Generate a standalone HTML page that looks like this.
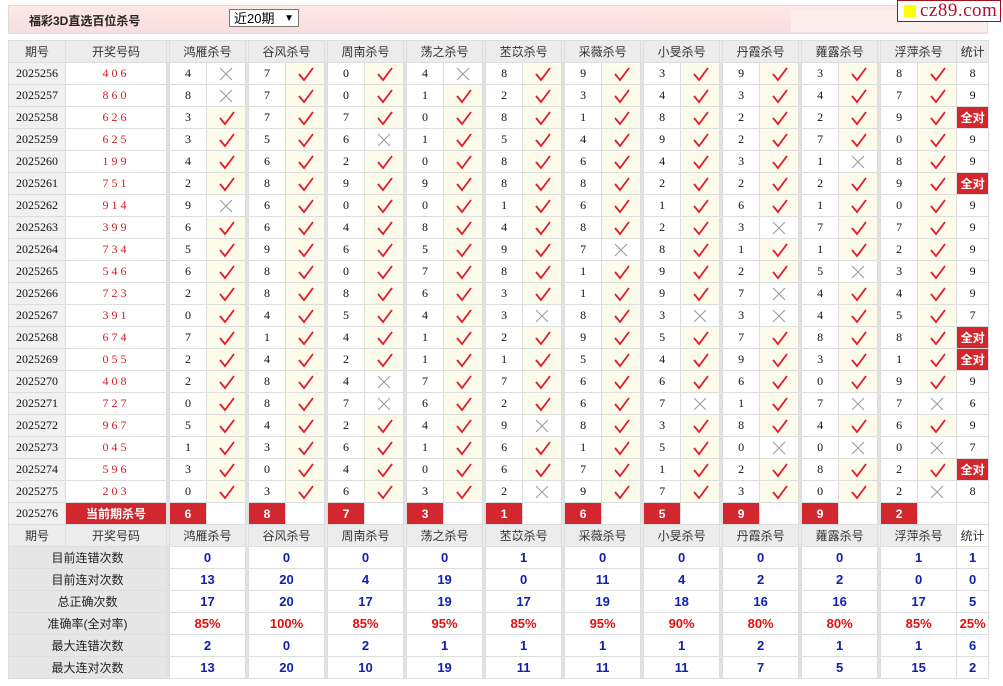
<!DOCTYPE html>
<html><head><meta charset="utf-8"><style>
body{margin:0;background:#fff;width:1003px;height:686px;overflow:hidden;font-family:"Liberation Sans","Noto Sans CJK SC",sans-serif;font-size:12px;position:relative}
.bar{position:absolute;left:8px;top:5px;width:978px;height:27px;border:1px solid #ddd;background:linear-gradient(#fde8e8,#f9dede)}
.bar .lt{position:absolute;left:782px;top:4px;width:196px;height:22px;background:#fdeeee}
.bar b{position:absolute;left:20px;top:6px;font-size:12px;color:#222}
.sel{position:absolute;left:220px;top:3px;width:70px;height:18px;border:1px solid #777;background:#fff;font-size:13px;line-height:18px;padding-left:4px;box-sizing:border-box;color:#000}
.sel i{position:absolute;right:4px;top:0;font-style:normal;font-size:10px}
.logo{position:absolute;left:897px;top:0;width:102px;height:20px;border:1px solid #a01020;background:#fff}
.logo span{position:absolute;left:6px;top:4px;width:12px;height:12px;background:#ff0}
.logo em{position:absolute;left:22px;top:-1px;font-style:normal;font-family:"Liberation Serif",serif;font-size:19px;color:#b01030;letter-spacing:0.5px}
table{position:absolute;left:8px;top:40px;border-collapse:collapse;table-layout:fixed;width:980px}
td{border:1px solid #ddd;height:21px;padding:0;text-align:center;font-family:"Liberation Serif","Noto Sans CJK SC",serif;font-size:12px;color:#111;overflow:hidden;white-space:nowrap}
tr.h td{background:#ececec;font-family:"Liberation Sans","Noto Sans CJK SC",sans-serif;color:#333}
td.q{background:#f1f1f1}
td.k{color:#d0202a;letter-spacing:3px}
td.s{background:#e2e2e2;border-top-color:#e2e2e2;border-bottom-color:#e2e2e2}
td.y{background:#fdfbea}
td.r{background:#d2272e;color:#fff;font-weight:bold;font-family:"Liberation Sans","Noto Sans CJK SC",sans-serif}
td.a{background:#d2272e;color:#fff;font-weight:bold;font-family:"Liberation Sans","Noto Sans CJK SC",sans-serif;font-size:12px}
td.l{background:#e6e6e6;font-family:"Liberation Sans","Noto Sans CJK SC",sans-serif;color:#222}
td.v{color:#1020b0;font-weight:bold;font-family:"Liberation Sans",sans-serif;font-size:13px}
td.p{color:#e01010;font-weight:bold;font-family:"Liberation Sans",sans-serif;font-size:13px}
svg{display:block;margin:0 auto;width:20px;height:18px}
</style></head><body>
<svg width="0" height="0" style="position:absolute"><defs>
<g id="c"><path d="M4 9 L9 15 L18 3" fill="none" stroke="#e01c30" stroke-width="1.8" stroke-linejoin="miter"/></g>
<g id="x"><path d="M4 3 L16 15 M16 3 L4 15" fill="none" stroke="#999" stroke-width="1"/></g>
</defs></svg>
<div class="bar"><div class="lt"></div><b>福彩3D直选百位杀号</b><div class="sel">近20期<i>▼</i></div></div>
<div class="logo"><span></span><em>cz89.com</em></div>
<table>
<colgroup><col style="width:57px"><col style="width:101px">
<col style="width:3px"><col style="width:37px"><col style="width:39px">
<col style="width:3px"><col style="width:37px"><col style="width:39px">
<col style="width:3px"><col style="width:37px"><col style="width:39px">
<col style="width:3px"><col style="width:37px"><col style="width:39px">
<col style="width:3px"><col style="width:37px"><col style="width:39px">
<col style="width:3px"><col style="width:37px"><col style="width:39px">
<col style="width:3px"><col style="width:37px"><col style="width:39px">
<col style="width:3px"><col style="width:37px"><col style="width:39px">
<col style="width:3px"><col style="width:37px"><col style="width:39px">
<col style="width:3px"><col style="width:37px"><col style="width:39px">
<col style="width:32px"></colgroup>
<tr class="h"><td>期号</td><td>开奖号码</td><td class="s"></td><td colspan="2">鸿雁杀号</td><td class="s"></td><td colspan="2">谷风杀号</td><td class="s"></td><td colspan="2">周南杀号</td><td class="s"></td><td colspan="2">荡之杀号</td><td class="s"></td><td colspan="2">苤苡杀号</td><td class="s"></td><td colspan="2">采薇杀号</td><td class="s"></td><td colspan="2">小旻杀号</td><td class="s"></td><td colspan="2">丹霞杀号</td><td class="s"></td><td colspan="2">蕹露杀号</td><td class="s"></td><td colspan="2">浮萍杀号</td><td>统计</td></tr>
<tr><td class="q">2025256</td><td class="k">406</td><td class="s"></td><td>4</td><td><svg><use href="#x"/></svg></td><td class="s"></td><td>7</td><td class="y"><svg><use href="#c"/></svg></td><td class="s"></td><td>0</td><td class="y"><svg><use href="#c"/></svg></td><td class="s"></td><td>4</td><td><svg><use href="#x"/></svg></td><td class="s"></td><td>8</td><td class="y"><svg><use href="#c"/></svg></td><td class="s"></td><td>9</td><td class="y"><svg><use href="#c"/></svg></td><td class="s"></td><td>3</td><td class="y"><svg><use href="#c"/></svg></td><td class="s"></td><td>9</td><td class="y"><svg><use href="#c"/></svg></td><td class="s"></td><td>3</td><td class="y"><svg><use href="#c"/></svg></td><td class="s"></td><td>8</td><td class="y"><svg><use href="#c"/></svg></td><td>8</td></tr>
<tr><td class="q">2025257</td><td class="k">860</td><td class="s"></td><td>8</td><td><svg><use href="#x"/></svg></td><td class="s"></td><td>7</td><td class="y"><svg><use href="#c"/></svg></td><td class="s"></td><td>0</td><td class="y"><svg><use href="#c"/></svg></td><td class="s"></td><td>1</td><td class="y"><svg><use href="#c"/></svg></td><td class="s"></td><td>2</td><td class="y"><svg><use href="#c"/></svg></td><td class="s"></td><td>3</td><td class="y"><svg><use href="#c"/></svg></td><td class="s"></td><td>4</td><td class="y"><svg><use href="#c"/></svg></td><td class="s"></td><td>3</td><td class="y"><svg><use href="#c"/></svg></td><td class="s"></td><td>4</td><td class="y"><svg><use href="#c"/></svg></td><td class="s"></td><td>7</td><td class="y"><svg><use href="#c"/></svg></td><td>9</td></tr>
<tr><td class="q">2025258</td><td class="k">626</td><td class="s"></td><td>3</td><td class="y"><svg><use href="#c"/></svg></td><td class="s"></td><td>7</td><td class="y"><svg><use href="#c"/></svg></td><td class="s"></td><td>7</td><td class="y"><svg><use href="#c"/></svg></td><td class="s"></td><td>0</td><td class="y"><svg><use href="#c"/></svg></td><td class="s"></td><td>8</td><td class="y"><svg><use href="#c"/></svg></td><td class="s"></td><td>1</td><td class="y"><svg><use href="#c"/></svg></td><td class="s"></td><td>8</td><td class="y"><svg><use href="#c"/></svg></td><td class="s"></td><td>2</td><td class="y"><svg><use href="#c"/></svg></td><td class="s"></td><td>2</td><td class="y"><svg><use href="#c"/></svg></td><td class="s"></td><td>9</td><td class="y"><svg><use href="#c"/></svg></td><td class="a">全对</td></tr>
<tr><td class="q">2025259</td><td class="k">625</td><td class="s"></td><td>3</td><td class="y"><svg><use href="#c"/></svg></td><td class="s"></td><td>5</td><td class="y"><svg><use href="#c"/></svg></td><td class="s"></td><td>6</td><td><svg><use href="#x"/></svg></td><td class="s"></td><td>1</td><td class="y"><svg><use href="#c"/></svg></td><td class="s"></td><td>5</td><td class="y"><svg><use href="#c"/></svg></td><td class="s"></td><td>4</td><td class="y"><svg><use href="#c"/></svg></td><td class="s"></td><td>9</td><td class="y"><svg><use href="#c"/></svg></td><td class="s"></td><td>2</td><td class="y"><svg><use href="#c"/></svg></td><td class="s"></td><td>7</td><td class="y"><svg><use href="#c"/></svg></td><td class="s"></td><td>0</td><td class="y"><svg><use href="#c"/></svg></td><td>9</td></tr>
<tr><td class="q">2025260</td><td class="k">199</td><td class="s"></td><td>4</td><td class="y"><svg><use href="#c"/></svg></td><td class="s"></td><td>6</td><td class="y"><svg><use href="#c"/></svg></td><td class="s"></td><td>2</td><td class="y"><svg><use href="#c"/></svg></td><td class="s"></td><td>0</td><td class="y"><svg><use href="#c"/></svg></td><td class="s"></td><td>8</td><td class="y"><svg><use href="#c"/></svg></td><td class="s"></td><td>6</td><td class="y"><svg><use href="#c"/></svg></td><td class="s"></td><td>4</td><td class="y"><svg><use href="#c"/></svg></td><td class="s"></td><td>3</td><td class="y"><svg><use href="#c"/></svg></td><td class="s"></td><td>1</td><td><svg><use href="#x"/></svg></td><td class="s"></td><td>8</td><td class="y"><svg><use href="#c"/></svg></td><td>9</td></tr>
<tr><td class="q">2025261</td><td class="k">751</td><td class="s"></td><td>2</td><td class="y"><svg><use href="#c"/></svg></td><td class="s"></td><td>8</td><td class="y"><svg><use href="#c"/></svg></td><td class="s"></td><td>9</td><td class="y"><svg><use href="#c"/></svg></td><td class="s"></td><td>9</td><td class="y"><svg><use href="#c"/></svg></td><td class="s"></td><td>8</td><td class="y"><svg><use href="#c"/></svg></td><td class="s"></td><td>8</td><td class="y"><svg><use href="#c"/></svg></td><td class="s"></td><td>2</td><td class="y"><svg><use href="#c"/></svg></td><td class="s"></td><td>2</td><td class="y"><svg><use href="#c"/></svg></td><td class="s"></td><td>2</td><td class="y"><svg><use href="#c"/></svg></td><td class="s"></td><td>9</td><td class="y"><svg><use href="#c"/></svg></td><td class="a">全对</td></tr>
<tr><td class="q">2025262</td><td class="k">914</td><td class="s"></td><td>9</td><td><svg><use href="#x"/></svg></td><td class="s"></td><td>6</td><td class="y"><svg><use href="#c"/></svg></td><td class="s"></td><td>0</td><td class="y"><svg><use href="#c"/></svg></td><td class="s"></td><td>0</td><td class="y"><svg><use href="#c"/></svg></td><td class="s"></td><td>1</td><td class="y"><svg><use href="#c"/></svg></td><td class="s"></td><td>6</td><td class="y"><svg><use href="#c"/></svg></td><td class="s"></td><td>1</td><td class="y"><svg><use href="#c"/></svg></td><td class="s"></td><td>6</td><td class="y"><svg><use href="#c"/></svg></td><td class="s"></td><td>1</td><td class="y"><svg><use href="#c"/></svg></td><td class="s"></td><td>0</td><td class="y"><svg><use href="#c"/></svg></td><td>9</td></tr>
<tr><td class="q">2025263</td><td class="k">399</td><td class="s"></td><td>6</td><td class="y"><svg><use href="#c"/></svg></td><td class="s"></td><td>6</td><td class="y"><svg><use href="#c"/></svg></td><td class="s"></td><td>4</td><td class="y"><svg><use href="#c"/></svg></td><td class="s"></td><td>8</td><td class="y"><svg><use href="#c"/></svg></td><td class="s"></td><td>4</td><td class="y"><svg><use href="#c"/></svg></td><td class="s"></td><td>8</td><td class="y"><svg><use href="#c"/></svg></td><td class="s"></td><td>2</td><td class="y"><svg><use href="#c"/></svg></td><td class="s"></td><td>3</td><td><svg><use href="#x"/></svg></td><td class="s"></td><td>7</td><td class="y"><svg><use href="#c"/></svg></td><td class="s"></td><td>7</td><td class="y"><svg><use href="#c"/></svg></td><td>9</td></tr>
<tr><td class="q">2025264</td><td class="k">734</td><td class="s"></td><td>5</td><td class="y"><svg><use href="#c"/></svg></td><td class="s"></td><td>9</td><td class="y"><svg><use href="#c"/></svg></td><td class="s"></td><td>6</td><td class="y"><svg><use href="#c"/></svg></td><td class="s"></td><td>5</td><td class="y"><svg><use href="#c"/></svg></td><td class="s"></td><td>9</td><td class="y"><svg><use href="#c"/></svg></td><td class="s"></td><td>7</td><td><svg><use href="#x"/></svg></td><td class="s"></td><td>8</td><td class="y"><svg><use href="#c"/></svg></td><td class="s"></td><td>1</td><td class="y"><svg><use href="#c"/></svg></td><td class="s"></td><td>1</td><td class="y"><svg><use href="#c"/></svg></td><td class="s"></td><td>2</td><td class="y"><svg><use href="#c"/></svg></td><td>9</td></tr>
<tr><td class="q">2025265</td><td class="k">546</td><td class="s"></td><td>6</td><td class="y"><svg><use href="#c"/></svg></td><td class="s"></td><td>8</td><td class="y"><svg><use href="#c"/></svg></td><td class="s"></td><td>0</td><td class="y"><svg><use href="#c"/></svg></td><td class="s"></td><td>7</td><td class="y"><svg><use href="#c"/></svg></td><td class="s"></td><td>8</td><td class="y"><svg><use href="#c"/></svg></td><td class="s"></td><td>1</td><td class="y"><svg><use href="#c"/></svg></td><td class="s"></td><td>9</td><td class="y"><svg><use href="#c"/></svg></td><td class="s"></td><td>2</td><td class="y"><svg><use href="#c"/></svg></td><td class="s"></td><td>5</td><td><svg><use href="#x"/></svg></td><td class="s"></td><td>3</td><td class="y"><svg><use href="#c"/></svg></td><td>9</td></tr>
<tr><td class="q">2025266</td><td class="k">723</td><td class="s"></td><td>2</td><td class="y"><svg><use href="#c"/></svg></td><td class="s"></td><td>8</td><td class="y"><svg><use href="#c"/></svg></td><td class="s"></td><td>8</td><td class="y"><svg><use href="#c"/></svg></td><td class="s"></td><td>6</td><td class="y"><svg><use href="#c"/></svg></td><td class="s"></td><td>3</td><td class="y"><svg><use href="#c"/></svg></td><td class="s"></td><td>1</td><td class="y"><svg><use href="#c"/></svg></td><td class="s"></td><td>9</td><td class="y"><svg><use href="#c"/></svg></td><td class="s"></td><td>7</td><td><svg><use href="#x"/></svg></td><td class="s"></td><td>4</td><td class="y"><svg><use href="#c"/></svg></td><td class="s"></td><td>4</td><td class="y"><svg><use href="#c"/></svg></td><td>9</td></tr>
<tr><td class="q">2025267</td><td class="k">391</td><td class="s"></td><td>0</td><td class="y"><svg><use href="#c"/></svg></td><td class="s"></td><td>4</td><td class="y"><svg><use href="#c"/></svg></td><td class="s"></td><td>5</td><td class="y"><svg><use href="#c"/></svg></td><td class="s"></td><td>4</td><td class="y"><svg><use href="#c"/></svg></td><td class="s"></td><td>3</td><td><svg><use href="#x"/></svg></td><td class="s"></td><td>8</td><td class="y"><svg><use href="#c"/></svg></td><td class="s"></td><td>3</td><td><svg><use href="#x"/></svg></td><td class="s"></td><td>3</td><td><svg><use href="#x"/></svg></td><td class="s"></td><td>4</td><td class="y"><svg><use href="#c"/></svg></td><td class="s"></td><td>5</td><td class="y"><svg><use href="#c"/></svg></td><td>7</td></tr>
<tr><td class="q">2025268</td><td class="k">674</td><td class="s"></td><td>7</td><td class="y"><svg><use href="#c"/></svg></td><td class="s"></td><td>1</td><td class="y"><svg><use href="#c"/></svg></td><td class="s"></td><td>4</td><td class="y"><svg><use href="#c"/></svg></td><td class="s"></td><td>1</td><td class="y"><svg><use href="#c"/></svg></td><td class="s"></td><td>2</td><td class="y"><svg><use href="#c"/></svg></td><td class="s"></td><td>9</td><td class="y"><svg><use href="#c"/></svg></td><td class="s"></td><td>5</td><td class="y"><svg><use href="#c"/></svg></td><td class="s"></td><td>7</td><td class="y"><svg><use href="#c"/></svg></td><td class="s"></td><td>8</td><td class="y"><svg><use href="#c"/></svg></td><td class="s"></td><td>8</td><td class="y"><svg><use href="#c"/></svg></td><td class="a">全对</td></tr>
<tr><td class="q">2025269</td><td class="k">055</td><td class="s"></td><td>2</td><td class="y"><svg><use href="#c"/></svg></td><td class="s"></td><td>4</td><td class="y"><svg><use href="#c"/></svg></td><td class="s"></td><td>2</td><td class="y"><svg><use href="#c"/></svg></td><td class="s"></td><td>1</td><td class="y"><svg><use href="#c"/></svg></td><td class="s"></td><td>1</td><td class="y"><svg><use href="#c"/></svg></td><td class="s"></td><td>5</td><td class="y"><svg><use href="#c"/></svg></td><td class="s"></td><td>4</td><td class="y"><svg><use href="#c"/></svg></td><td class="s"></td><td>9</td><td class="y"><svg><use href="#c"/></svg></td><td class="s"></td><td>3</td><td class="y"><svg><use href="#c"/></svg></td><td class="s"></td><td>1</td><td class="y"><svg><use href="#c"/></svg></td><td class="a">全对</td></tr>
<tr><td class="q">2025270</td><td class="k">408</td><td class="s"></td><td>2</td><td class="y"><svg><use href="#c"/></svg></td><td class="s"></td><td>8</td><td class="y"><svg><use href="#c"/></svg></td><td class="s"></td><td>4</td><td><svg><use href="#x"/></svg></td><td class="s"></td><td>7</td><td class="y"><svg><use href="#c"/></svg></td><td class="s"></td><td>7</td><td class="y"><svg><use href="#c"/></svg></td><td class="s"></td><td>6</td><td class="y"><svg><use href="#c"/></svg></td><td class="s"></td><td>6</td><td class="y"><svg><use href="#c"/></svg></td><td class="s"></td><td>6</td><td class="y"><svg><use href="#c"/></svg></td><td class="s"></td><td>0</td><td class="y"><svg><use href="#c"/></svg></td><td class="s"></td><td>9</td><td class="y"><svg><use href="#c"/></svg></td><td>9</td></tr>
<tr><td class="q">2025271</td><td class="k">727</td><td class="s"></td><td>0</td><td class="y"><svg><use href="#c"/></svg></td><td class="s"></td><td>8</td><td class="y"><svg><use href="#c"/></svg></td><td class="s"></td><td>7</td><td><svg><use href="#x"/></svg></td><td class="s"></td><td>6</td><td class="y"><svg><use href="#c"/></svg></td><td class="s"></td><td>2</td><td class="y"><svg><use href="#c"/></svg></td><td class="s"></td><td>6</td><td class="y"><svg><use href="#c"/></svg></td><td class="s"></td><td>7</td><td><svg><use href="#x"/></svg></td><td class="s"></td><td>1</td><td class="y"><svg><use href="#c"/></svg></td><td class="s"></td><td>7</td><td><svg><use href="#x"/></svg></td><td class="s"></td><td>7</td><td><svg><use href="#x"/></svg></td><td>6</td></tr>
<tr><td class="q">2025272</td><td class="k">967</td><td class="s"></td><td>5</td><td class="y"><svg><use href="#c"/></svg></td><td class="s"></td><td>4</td><td class="y"><svg><use href="#c"/></svg></td><td class="s"></td><td>2</td><td class="y"><svg><use href="#c"/></svg></td><td class="s"></td><td>4</td><td class="y"><svg><use href="#c"/></svg></td><td class="s"></td><td>9</td><td><svg><use href="#x"/></svg></td><td class="s"></td><td>8</td><td class="y"><svg><use href="#c"/></svg></td><td class="s"></td><td>3</td><td class="y"><svg><use href="#c"/></svg></td><td class="s"></td><td>8</td><td class="y"><svg><use href="#c"/></svg></td><td class="s"></td><td>4</td><td class="y"><svg><use href="#c"/></svg></td><td class="s"></td><td>6</td><td class="y"><svg><use href="#c"/></svg></td><td>9</td></tr>
<tr><td class="q">2025273</td><td class="k">045</td><td class="s"></td><td>1</td><td class="y"><svg><use href="#c"/></svg></td><td class="s"></td><td>3</td><td class="y"><svg><use href="#c"/></svg></td><td class="s"></td><td>6</td><td class="y"><svg><use href="#c"/></svg></td><td class="s"></td><td>1</td><td class="y"><svg><use href="#c"/></svg></td><td class="s"></td><td>6</td><td class="y"><svg><use href="#c"/></svg></td><td class="s"></td><td>1</td><td class="y"><svg><use href="#c"/></svg></td><td class="s"></td><td>5</td><td class="y"><svg><use href="#c"/></svg></td><td class="s"></td><td>0</td><td><svg><use href="#x"/></svg></td><td class="s"></td><td>0</td><td><svg><use href="#x"/></svg></td><td class="s"></td><td>0</td><td><svg><use href="#x"/></svg></td><td>7</td></tr>
<tr><td class="q">2025274</td><td class="k">596</td><td class="s"></td><td>3</td><td class="y"><svg><use href="#c"/></svg></td><td class="s"></td><td>0</td><td class="y"><svg><use href="#c"/></svg></td><td class="s"></td><td>4</td><td class="y"><svg><use href="#c"/></svg></td><td class="s"></td><td>0</td><td class="y"><svg><use href="#c"/></svg></td><td class="s"></td><td>6</td><td class="y"><svg><use href="#c"/></svg></td><td class="s"></td><td>7</td><td class="y"><svg><use href="#c"/></svg></td><td class="s"></td><td>1</td><td class="y"><svg><use href="#c"/></svg></td><td class="s"></td><td>2</td><td class="y"><svg><use href="#c"/></svg></td><td class="s"></td><td>8</td><td class="y"><svg><use href="#c"/></svg></td><td class="s"></td><td>2</td><td class="y"><svg><use href="#c"/></svg></td><td class="a">全对</td></tr>
<tr><td class="q">2025275</td><td class="k">203</td><td class="s"></td><td>0</td><td class="y"><svg><use href="#c"/></svg></td><td class="s"></td><td>3</td><td class="y"><svg><use href="#c"/></svg></td><td class="s"></td><td>6</td><td class="y"><svg><use href="#c"/></svg></td><td class="s"></td><td>3</td><td class="y"><svg><use href="#c"/></svg></td><td class="s"></td><td>2</td><td><svg><use href="#x"/></svg></td><td class="s"></td><td>9</td><td class="y"><svg><use href="#c"/></svg></td><td class="s"></td><td>7</td><td class="y"><svg><use href="#c"/></svg></td><td class="s"></td><td>3</td><td class="y"><svg><use href="#c"/></svg></td><td class="s"></td><td>0</td><td class="y"><svg><use href="#c"/></svg></td><td class="s"></td><td>2</td><td><svg><use href="#x"/></svg></td><td>8</td></tr>
<tr><td class="q">2025276</td><td class="r">当前期杀号</td><td class="s"></td><td class="r">6</td><td></td><td class="s"></td><td class="r">8</td><td></td><td class="s"></td><td class="r">7</td><td></td><td class="s"></td><td class="r">3</td><td></td><td class="s"></td><td class="r">1</td><td></td><td class="s"></td><td class="r">6</td><td></td><td class="s"></td><td class="r">5</td><td></td><td class="s"></td><td class="r">9</td><td></td><td class="s"></td><td class="r">9</td><td></td><td class="s"></td><td class="r">2</td><td></td><td></td></tr>
<tr class="h"><td>期号</td><td>开奖号码</td><td class="s"></td><td colspan="2">鸿雁杀号</td><td class="s"></td><td colspan="2">谷风杀号</td><td class="s"></td><td colspan="2">周南杀号</td><td class="s"></td><td colspan="2">荡之杀号</td><td class="s"></td><td colspan="2">苤苡杀号</td><td class="s"></td><td colspan="2">采薇杀号</td><td class="s"></td><td colspan="2">小旻杀号</td><td class="s"></td><td colspan="2">丹霞杀号</td><td class="s"></td><td colspan="2">蕹露杀号</td><td class="s"></td><td colspan="2">浮萍杀号</td><td style="background:#fff">统计</td></tr>
<tr><td class="l" colspan="2">目前连错次数</td><td class="s"></td><td class="v" colspan="2">0</td><td class="s"></td><td class="v" colspan="2">0</td><td class="s"></td><td class="v" colspan="2">0</td><td class="s"></td><td class="v" colspan="2">0</td><td class="s"></td><td class="v" colspan="2">1</td><td class="s"></td><td class="v" colspan="2">0</td><td class="s"></td><td class="v" colspan="2">0</td><td class="s"></td><td class="v" colspan="2">0</td><td class="s"></td><td class="v" colspan="2">0</td><td class="s"></td><td class="v" colspan="2">1</td><td class="v">1</td></tr>
<tr><td class="l" colspan="2">目前连对次数</td><td class="s"></td><td class="v" colspan="2">13</td><td class="s"></td><td class="v" colspan="2">20</td><td class="s"></td><td class="v" colspan="2">4</td><td class="s"></td><td class="v" colspan="2">19</td><td class="s"></td><td class="v" colspan="2">0</td><td class="s"></td><td class="v" colspan="2">11</td><td class="s"></td><td class="v" colspan="2">4</td><td class="s"></td><td class="v" colspan="2">2</td><td class="s"></td><td class="v" colspan="2">2</td><td class="s"></td><td class="v" colspan="2">0</td><td class="v">0</td></tr>
<tr><td class="l" colspan="2">总正确次数</td><td class="s"></td><td class="v" colspan="2">17</td><td class="s"></td><td class="v" colspan="2">20</td><td class="s"></td><td class="v" colspan="2">17</td><td class="s"></td><td class="v" colspan="2">19</td><td class="s"></td><td class="v" colspan="2">17</td><td class="s"></td><td class="v" colspan="2">19</td><td class="s"></td><td class="v" colspan="2">18</td><td class="s"></td><td class="v" colspan="2">16</td><td class="s"></td><td class="v" colspan="2">16</td><td class="s"></td><td class="v" colspan="2">17</td><td class="v">5</td></tr>
<tr><td class="l" colspan="2">准确率(全对率)</td><td class="s"></td><td class="p" colspan="2">85%</td><td class="s"></td><td class="p" colspan="2">100%</td><td class="s"></td><td class="p" colspan="2">85%</td><td class="s"></td><td class="p" colspan="2">95%</td><td class="s"></td><td class="p" colspan="2">85%</td><td class="s"></td><td class="p" colspan="2">95%</td><td class="s"></td><td class="p" colspan="2">90%</td><td class="s"></td><td class="p" colspan="2">80%</td><td class="s"></td><td class="p" colspan="2">80%</td><td class="s"></td><td class="p" colspan="2">85%</td><td class="p">25%</td></tr>
<tr><td class="l" colspan="2">最大连错次数</td><td class="s"></td><td class="v" colspan="2">2</td><td class="s"></td><td class="v" colspan="2">0</td><td class="s"></td><td class="v" colspan="2">2</td><td class="s"></td><td class="v" colspan="2">1</td><td class="s"></td><td class="v" colspan="2">1</td><td class="s"></td><td class="v" colspan="2">1</td><td class="s"></td><td class="v" colspan="2">1</td><td class="s"></td><td class="v" colspan="2">2</td><td class="s"></td><td class="v" colspan="2">1</td><td class="s"></td><td class="v" colspan="2">1</td><td class="v">6</td></tr>
<tr><td class="l" colspan="2">最大连对次数</td><td class="s"></td><td class="v" colspan="2">13</td><td class="s"></td><td class="v" colspan="2">20</td><td class="s"></td><td class="v" colspan="2">10</td><td class="s"></td><td class="v" colspan="2">19</td><td class="s"></td><td class="v" colspan="2">11</td><td class="s"></td><td class="v" colspan="2">11</td><td class="s"></td><td class="v" colspan="2">11</td><td class="s"></td><td class="v" colspan="2">7</td><td class="s"></td><td class="v" colspan="2">5</td><td class="s"></td><td class="v" colspan="2">15</td><td class="v">2</td></tr>
</table>
</body></html>
